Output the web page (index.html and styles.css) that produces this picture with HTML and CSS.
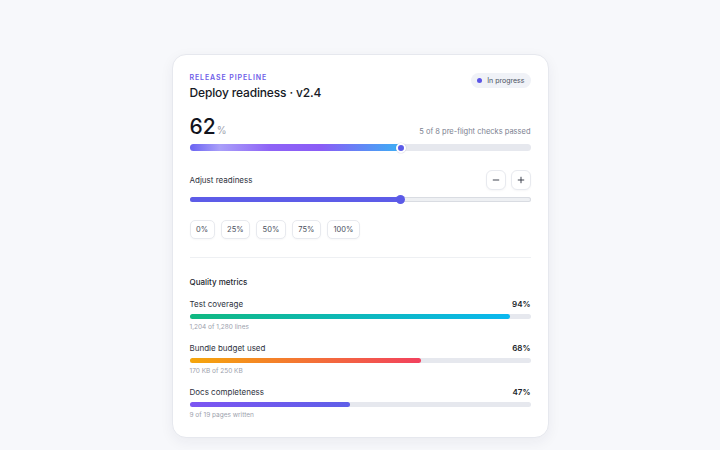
FILE: index.html
```html
<!DOCTYPE html>
<html lang="en">
<head>
<meta charset="utf-8">
<title>Deploy readiness</title>
<link rel="stylesheet" href="styles.css">
</head>
<body>
  <main class="card">
    <header class="card-head">
      <div>
        <div class="eyebrow">Release pipeline</div>
        <h1 class="title">Deploy readiness · v2.4</h1>
      </div>
      <span class="badge"><span class="badge-dot"></span>In progress</span>
    </header>

    <section class="summary">
      <div class="stat-row">
        <div class="stat"><span class="stat-value">62</span><span class="stat-unit">%</span></div>
        <div class="stat-caption">5 of 8 pre-flight checks passed</div>
      </div>
      <div class="progress">
        <div class="progress-fill" style="width: 62%"></div>
        <div class="progress-thumb" style="left: 62%"></div>
      </div>
    </section>

    <section class="adjust">
      <div class="adjust-row">
        <span class="adjust-label">Adjust readiness</span>
        <div class="steppers">
          <button class="step-btn" type="button" aria-label="Decrease">
            <svg viewBox="0 0 10 10" width="8" height="8"><path d="M1.5 5h7" stroke="currentColor" stroke-width="1.2" stroke-linecap="round"/></svg>
          </button>
          <button class="step-btn" type="button" aria-label="Increase">
            <svg viewBox="0 0 10 10" width="8" height="8"><path d="M1.5 5h7M5 1.5v7" stroke="currentColor" stroke-width="1.2" stroke-linecap="round"/></svg>
          </button>
        </div>
      </div>
      <div class="slider">
        <div class="slider-track">
          <div class="slider-fill" style="width: 62%"></div>
        </div>
        <div class="slider-thumb" style="left: 62%"></div>
      </div>
      <div class="presets">
        <button class="preset" type="button">0%</button>
        <button class="preset" type="button">25%</button>
        <button class="preset" type="button">50%</button>
        <button class="preset" type="button">75%</button>
        <button class="preset" type="button">100%</button>
      </div>
    </section>

    <hr class="divider">

    <section class="metrics">
      <h2 class="metrics-title">Quality metrics</h2>
      <div class="metric">
        <div class="metric-row"><span class="metric-name">Test coverage</span><span class="metric-value">94%</span></div>
        <div class="bar"><div class="bar-fill fill-coverage" style="width: 94%"></div></div>
        <div class="metric-note">1,204 of 1,280 lines</div>
      </div>
      <div class="metric">
        <div class="metric-row"><span class="metric-name">Bundle budget used</span><span class="metric-value">68%</span></div>
        <div class="bar"><div class="bar-fill fill-bundle" style="width: 68%"></div></div>
        <div class="metric-note">170 KB of 250 KB</div>
      </div>
      <div class="metric">
        <div class="metric-row"><span class="metric-name">Docs completeness</span><span class="metric-value">47%</span></div>
        <div class="bar"><div class="bar-fill fill-docs" style="width: 47%"></div></div>
        <div class="metric-note">9 of 19 pages written</div>
      </div>
    </section>
  </main>
</body>
</html>
```

FILE: styles.css
```css
* {
  box-sizing: border-box;
}

html, body {
  margin: 0;
  height: 100%;
}

body {
  background: #f7f8fb;
  font-family: Inter, "Noto Sans", "Liberation Sans", sans-serif;
  color: #1b1e2b;
  padding-top: 54px;
}

.card {
  width: 377px;
  margin: 0 auto;
  background: #ffffff;
  border: 1px solid #e6e8ee;
  border-radius: 14px;
  box-shadow: 0 4px 14px rgba(30, 35, 60, 0.06);
  padding: 18px 17px 17px;
}

/* Header */
.card-head {
  display: flex;
  justify-content: space-between;
  align-items: flex-start;
}

.eyebrow {
  font-size: 7px;
  font-weight: 600;
  letter-spacing: 0.9px;
  text-transform: uppercase;
  color: #6d5ce8;
  line-height: 10px;
}

.title {
  margin: 1.5px 0 0;
  font-size: 12px;
  font-weight: 500;
  letter-spacing: -0.15px;
  line-height: 16px;
  color: #161925;
}

.badge {
  display: inline-flex;
  align-items: center;
  gap: 5px;
  margin-top: 0;
  height: 15px;
  padding: 0 6px 0 6px;
  border-radius: 8px;
  background: #f0f2f7;
  font-size: 7px;
  color: #4a5060;
}

.badge-dot {
  width: 5px;
  height: 5px;
  border-radius: 50%;
  background: #5b55e6;
}

/* Summary */
.summary {
  margin-top: 13px;
}

.stat-row {
  display: flex;
  justify-content: space-between;
  align-items: baseline;
}

.stat-value {
  font-size: 21px;
  font-weight: 500;
  line-height: 26px;
  color: #12141d;
}

.stat-unit {
  margin-left: 1px;
  font-size: 10px;
  color: #9ca1ad;
}

.stat-caption {
  font-size: 7.5px;
  color: #7b8190;
}

.progress {
  position: relative;
  margin-top: 4.5px;
  height: 7px;
  border-radius: 4px;
  background: #e6e8ee;
}

.progress-fill {
  height: 100%;
  border-radius: 4px;
  background: linear-gradient(90deg, #6a63f2 0%, #a99ff9 14%, #8e63f6 38%, #8a5cf6 62%, #3bb0f5 100%);
}

.progress-thumb {
  position: absolute;
  top: 50%;
  width: 10px;
  height: 10px;
  margin: -5px 0 0 -5px;
  border-radius: 50%;
  background: #5b5be8;
  border: 2px solid #ffffff;
  box-shadow: 0 0 0 0.5px rgba(60, 60, 120, 0.15);
}

/* Adjust */
.adjust {
  margin-top: 18.5px;
}

.adjust-row {
  display: flex;
  justify-content: space-between;
  align-items: center;
}

.adjust-label {
  font-size: 8px;
  color: #2e3240;
}

.steppers {
  display: flex;
  gap: 5px;
}

.step-btn {
  width: 20px;
  height: 20px;
  padding: 0;
  display: flex;
  align-items: center;
  justify-content: center;
  border: 1px solid #e8eaef;
  border-radius: 6px;
  background: #ffffff;
  color: #3a3e4a;
  box-shadow: 0 1px 2px rgba(20, 25, 45, 0.04);
}

.slider {
  position: relative;
  margin-top: 5px;
  height: 10px;
  display: flex;
  align-items: center;
}

.slider-track {
  width: 100%;
  height: 5px;
  border-radius: 3px;
  background: #eef0f3;
  box-shadow: inset 0 0 0 1px #d9dce2;
  overflow: hidden;
}

.slider-fill {
  height: 100%;
  background: #5d5ce8;
}

.slider-thumb {
  position: absolute;
  top: 50%;
  width: 9px;
  height: 9px;
  margin: -4.5px 0 0 -4.5px;
  border-radius: 50%;
  background: #5b5ae7;
}

.presets {
  display: flex;
  gap: 6px;
  margin-top: 15.5px;
}

.preset {
  height: 19px;
  padding: 0 5.5px;
  border: 1px solid #e8eaef;
  border-radius: 5px;
  background: #ffffff;
  font-family: inherit;
  font-size: 7.5px;
  color: #4b505e;
  box-shadow: 0 1px 2px rgba(20, 25, 45, 0.03);
}

.divider {
  margin: 17.5px 0 0;
  border: 0;
  border-top: 1px solid #eef0f3;
}

/* Metrics */
.metrics {
  margin-top: 17px;
}

.metrics-title {
  margin: 0;
  font-size: 8px;
  font-weight: 500;
  line-height: 14px;
  color: #23262f;
}

.metric {
  margin-top: 8px;
}

.metric + .metric {
  margin-top: 9px;
}

.metric-row {
  display: flex;
  justify-content: space-between;
  align-items: baseline;
  line-height: 14px;
}

.metric-name {
  font-size: 8px;
  color: #2e3240;
}

.metric-value {
  font-size: 8px;
  font-weight: 600;
  color: #1b1e2b;
}

.bar {
  margin-top: 3px;
  height: 5px;
  border-radius: 3px;
  background: #e6e8ee;
}

.bar-fill {
  height: 100%;
  border-radius: 3px;
}

.fill-coverage {
  background: linear-gradient(90deg, #10b981, #0bb8f0);
}

.fill-bundle {
  background: linear-gradient(90deg, #f5a60b, #f2415e);
}

.fill-docs {
  background: linear-gradient(90deg, #7c55f2, #5f5fe8);
}

.metric-note {
  margin-top: 3px;
  font-size: 6.5px;
  line-height: 10px;
  color: #9ca1ad;
}
```
